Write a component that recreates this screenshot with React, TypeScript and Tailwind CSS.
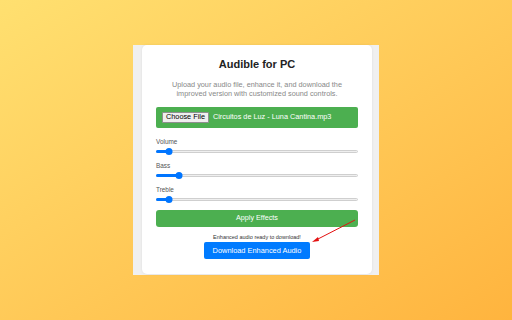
import React from "react";

const Slider = ({ label, pos }: { label: string; pos: number }) => (
  <div>
    <p className="text-[6.4px] leading-[8px] text-[#555] mt-[7px]">{label}</p>
    <div className="relative h-[8px] mt-[1px] flex items-center">
      <div className="w-full h-[3px] rounded-full bg-[#efefef] border border-[#cfcfcf]" />
      <div className="absolute left-0 h-[3px] rounded-full bg-[#0075ff]" style={{ width: pos }} />
      <div
        className="absolute size-[7px] rounded-full bg-[#0075ff] -translate-x-1/2"
        style={{ left: pos }}
      />
    </div>
  </div>
);

export default function App() {
  return (
    <div
      className="w-[512px] h-[320px] flex items-center justify-center bg-gradient-to-br from-[#ffe070] to-[#ffb43e]"
      style={{ fontFamily: '"Liberation Sans", Arial, sans-serif' }}
    >
      <div className="w-[246px] h-[230px] bg-[#f0f0f0] pl-[9px] pr-[7px] pb-[1px] flex">
        <div className="relative flex-1 bg-white rounded-[5px] shadow-[0_0_3px_rgba(0,0,0,0.08)] px-[14px] pt-[13px]">
          <h1 className="text-[11px] leading-[13px] font-bold text-[#222] text-center">Audible for PC</h1>
          <p className="mt-[10px] text-[7.3px] leading-[8.5px] text-[#888] text-center px-[2px]">
            Upload your audio file, enhance it, and download the improved version with customized sound controls.
          </p>
          <div className="mt-[9px] h-[21px] bg-[#4caf50] rounded-[2px] flex items-center pl-[6px] gap-[4px]">
            <span className="h-[11px] px-[3px] flex items-center bg-[#efefef] border border-[#8f8f8f] rounded-[1px] text-[7.3px] text-black">
              Choose File
            </span>
            <span className="text-[7.3px] text-white">Circuitos de Luz - Luna Cantina.mp3</span>
          </div>
          <div className="mt-[10px]">
            <Slider label="Volume" pos={13} />
            <Slider label="Bass" pos={23} />
            <Slider label="Treble" pos={13} />
          </div>
          <button className="mt-[7px] w-full h-[17px] bg-[#4caf50] rounded-[3px] text-white text-[7.2px]">
            Apply Effects
          </button>
          <p className="mt-[7px] text-[5.5px] leading-[6.5px] text-[#333] text-center">Enhanced audio ready to download!</p>
          <div className="mt-[1px] flex justify-center">
            <button className="w-[106px] h-[17px] bg-[#007bff] rounded-[2px] text-white text-[7.4px]">
              Download Enhanced Audio
            </button>
          </div>
          <svg className="absolute left-0 top-0 pointer-events-none" width="230" height="229" viewBox="0 0 230 229">
            <line x1="213" y1="175" x2="174" y2="195" stroke="#e31010" strokeWidth="1" />
            <polygon points="170,197 176,192 177,196" fill="#e31010" />
          </svg>
        </div>
      </div>
    </div>
  );
}
